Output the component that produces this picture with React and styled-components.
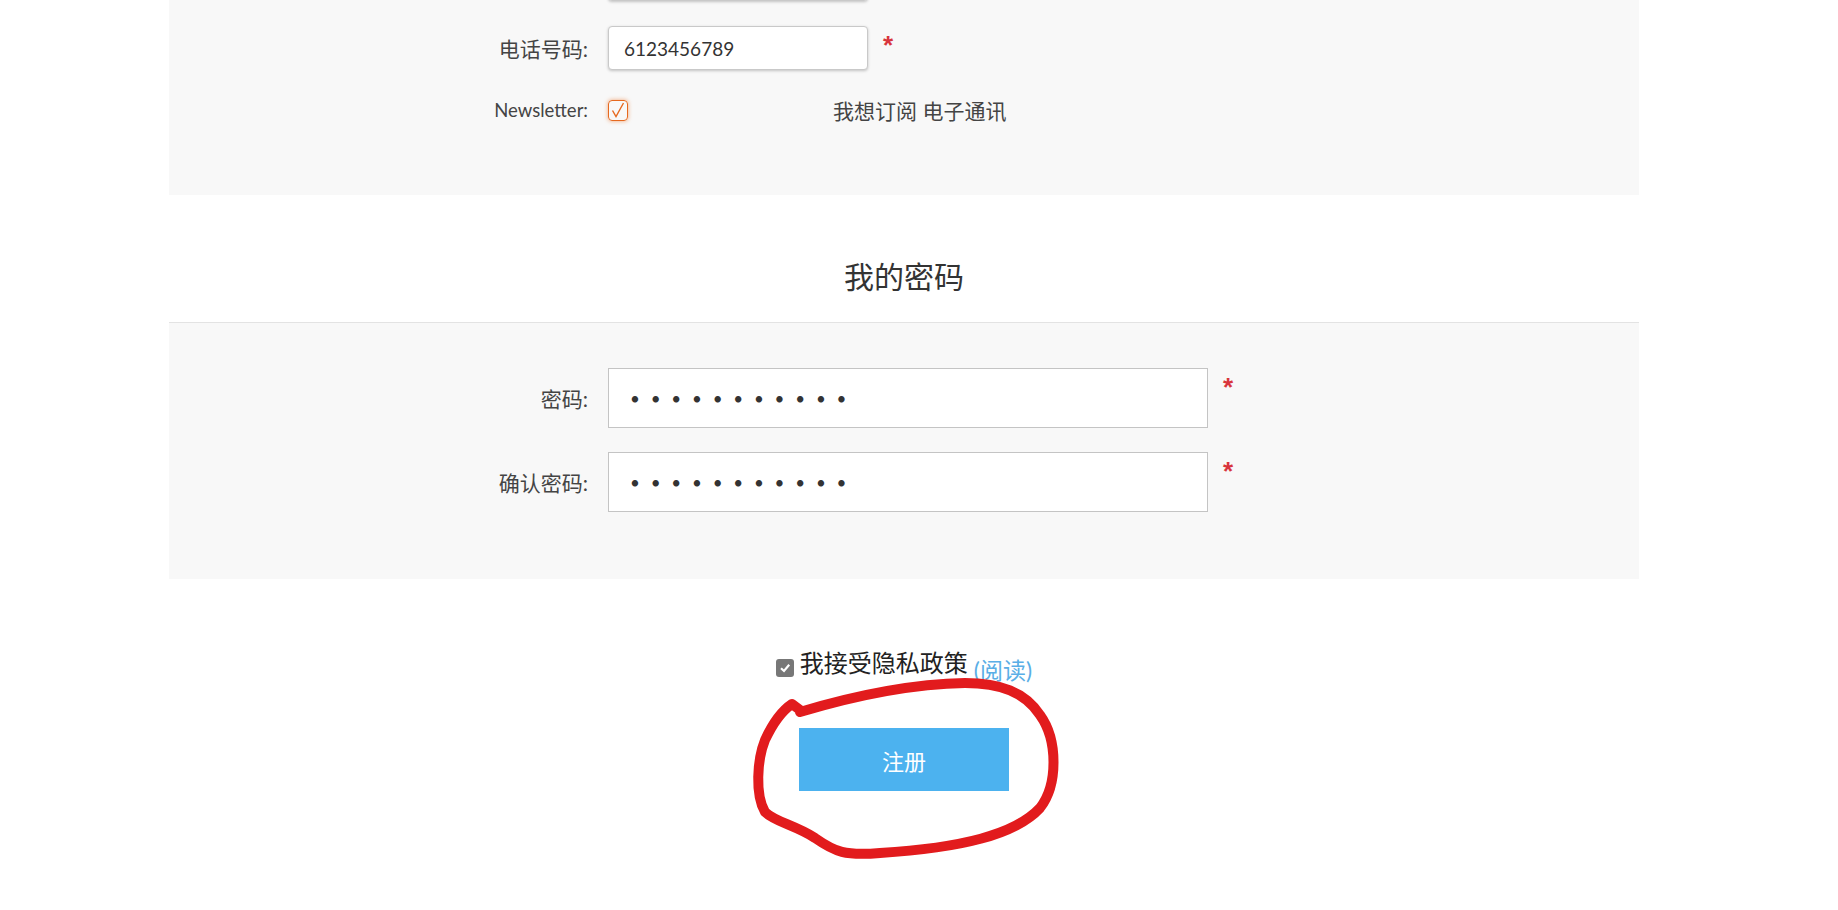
import React from 'react';
import styled, { createGlobalStyle } from 'styled-components';

const Global = createGlobalStyle`
	body {
		margin: 0;
		background: #fff;
		font-family: "Lato", "Noto Sans CJK SC", sans-serif;
		color: #444;
		overflow: hidden;
	}
`

const Page = styled.div`
	margin-top: -83px;
	height: 993px;
`

const Container = styled.div`
	width: 1470px;
	margin-left: 169px;
`

const Panel = styled.section`
	background: #f8f8f8;
	display: flex;
	flex-direction: column;
	gap: ${p => p.$gap}px;
	padding: ${p => p.$pad};
	border-top: ${p => p.$bordered ? '1px solid #e3e3e3' : 'none'};
`

const Row = styled.div`
	display: flex;
	align-items: center;
	gap: 20px;
`

const Label = styled.label`
	width: 419px;
	flex-shrink: 0;
	text-align: right;
	font-size: ${p => p.$size || 21}px;
	line-height: 29px;
	color: #444;
`

const Field = styled.div`
	display: flex;
	align-items: flex-start;
	gap: 15px;
`

const TextInput = styled.input`
	box-sizing: border-box;
	width: ${p => p.$w}px;
	height: ${p => p.$h}px;
	background: #fff;
	border: 1px solid ${p => p.$soft ? '#c9c9c9' : '#c4c4c4'};
	border-radius: ${p => p.$soft ? '4px' : '0'};
	box-shadow: ${p => p.$soft ? '0 1px 3px rgba(0,0,0,0.22)' : 'none'};
	padding: 0 0 0 ${p => p.$soft ? 15 : 21}px;
	font-family: inherit;
	font-size: ${p => p.$soft ? 19 : 17}px;
	letter-spacing: ${p => p.$soft ? 0 : 10.8}px;
	color: #333;
	outline: none;
`

const Required = styled.span`
	color: #d8353d;
	font-family: "Liberation Sans", sans-serif;
	font-weight: 700;
	font-size: 26px;
	line-height: 1;
	margin-top: 6px;
`

const OrangeBox = styled.span`
	box-sizing: border-box;
	width: 20px;
	height: 21px;
	border: 1.5px solid #e6691f;
	border-radius: 4px;
	box-shadow: 0 0 4px rgba(238, 110, 30, 0.6);
	display: flex;
	align-items: center;
	justify-content: center;
`

const NewsText = styled.span`
	margin-left: 185px;
	font-size: 21px;
	color: #444;
`

const Heading = styled.h2`
	box-sizing: border-box;
	height: 127px;
	margin: 0;
	padding-top: 63px;
	text-align: center;
	font-size: 30px;
	line-height: 36px;
	font-weight: 400;
	color: #333;
`

const Footer = styled.div`
	display: flex;
	flex-direction: column;
	align-items: center;
	padding-top: 69px;
	gap: 40px;
`

const Consent = styled.div`
	display: flex;
	align-items: center;
	gap: 6px;
`

const GreyBox = styled.span`
	width: 18px;
	height: 18px;
	border-radius: 3px;
	background: #777;
	display: flex;
	align-items: center;
	justify-content: center;
`

const ConsentText = styled.span`
	font-size: 24px;
	line-height: 30px;
	color: #222;
	margin-bottom: 10px;
`

const ReadLink = styled.a`
	font-size: 23px;
	line-height: 30px;
	color: #5aaee6;
	text-decoration: none;
	margin-top: 4px;
`

const SubmitButton = styled.button`
	width: 210px;
	height: 63px;
	border: none;
	background: #4cb2ef;
	color: #fff;
	font-family: inherit;
	font-size: 22px;
	cursor: pointer;
`

const Scribble = styled.svg`
	position: fixed;
	left: 0;
	top: 0;
	pointer-events: none;
`

const App = () => (
	<>
		<Global />
		<Page>
			<Container>
				<Panel $gap={25} $pad="40px 0 70px">
					<Row>
						<Label />
						<Field><TextInput $soft $w={260} $h={44} readOnly /></Field>
					</Row>
					<Row>
						<Label>电话号码:</Label>
						<Field>
							<TextInput $soft $w={260} $h={44} defaultValue="6123456789" />
							<Required>*</Required>
						</Field>
					</Row>
					<Row>
						<Label $size={18.5}>Newsletter:</Label>
						<OrangeBox>
							<svg width="14" height="16" viewBox="0 0 14 16">
								<path d="M1.5 8.5 L5 14.5 L12.5 1" fill="none" stroke="#e6691f" strokeWidth="1.4" />
							</svg>
						</OrangeBox>
						<NewsText>我想订阅 电子通讯</NewsText>
					</Row>
				</Panel>

				<Heading>我的密码</Heading>

				<Panel $bordered $gap={24} $pad="45px 0 67px">
					<Row>
						<Label>密码:</Label>
						<Field>
							<TextInput type="password" $w={600} $h={60} defaultValue="abcdefghijk" />
							<Required>*</Required>
						</Field>
					</Row>
					<Row>
						<Label>确认密码:</Label>
						<Field>
							<TextInput type="password" $w={600} $h={60} defaultValue="abcdefghijk" />
							<Required>*</Required>
						</Field>
					</Row>
				</Panel>

				<Footer>
					<Consent>
						<GreyBox>
							<svg width="12" height="12" viewBox="0 0 12 12">
								<path d="M2 6.2 L5 9 L10.2 2.8" fill="none" stroke="#fff" strokeWidth="2.2" />
							</svg>
						</GreyBox>
						<ConsentText>我接受隐私政策</ConsentText>
						<ReadLink href="#">(阅读)</ReadLink>
					</Consent>
					<SubmitButton>注册</SubmitButton>
				</Footer>
			</Container>
		</Page>

		<Scribble width="1838" height="910" viewBox="0 0 1838 910">
			<path
				d="M800 712 C 850 697, 910 684, 965 683 C 1000 683, 1025 692, 1040 715 C 1058 740, 1058 785, 1040 808 C 1015 835, 960 848, 880 853 C 845 856, 835 852, 815 838 C 795 825, 775 822, 765 812 C 755 795, 757 760, 765 740 C 772 725, 780 712, 792 704 L 800 710"
				fill="none"
				stroke="#e21b1d"
				strokeWidth="10"
				strokeLinecap="round"
				strokeLinejoin="round"
			/>
		</Scribble>
	</>
);

export default App;
